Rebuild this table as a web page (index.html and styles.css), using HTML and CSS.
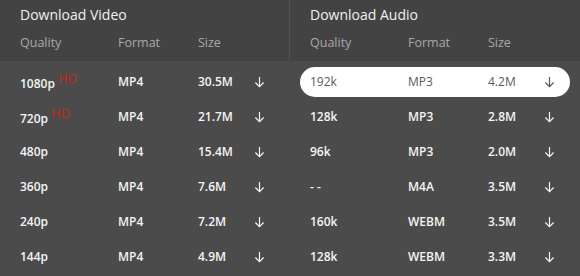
FILE: index.html
```html
<!DOCTYPE html>
<html lang="en">

<head>
    <meta charset="UTF-8">
    <title>Download</title>
    <link rel="stylesheet" href="styles.css">
</head>

<body>
    <div class="container">
        <div class="panel">
            <div class="panel-head">
                <h2>Download Video</h2>
                <div class="cols">
                    <span>Quality</span><span>Format</span><span>Size</span><span></span>
                </div>
            </div>
            <ul class="rows">
                <li class="row"><span>1080p<span class="hd">HD</span></span><span>MP4</span><span>30.5M</span><svg class="dl" viewBox="0 0 12 12"><path d="M6 0.5V11M1.5 6.5L6 11L10.5 6.5"/></svg></li>
                <li class="row"><span>720p<span class="hd">HD</span></span><span>MP4</span><span>21.7M</span><svg class="dl" viewBox="0 0 12 12"><path d="M6 0.5V11M1.5 6.5L6 11L10.5 6.5"/></svg></li>
                <li class="row"><span>480p</span><span>MP4</span><span>15.4M</span><svg class="dl" viewBox="0 0 12 12"><path d="M6 0.5V11M1.5 6.5L6 11L10.5 6.5"/></svg></li>
                <li class="row"><span>360p</span><span>MP4</span><span>7.6M</span><svg class="dl" viewBox="0 0 12 12"><path d="M6 0.5V11M1.5 6.5L6 11L10.5 6.5"/></svg></li>
                <li class="row"><span>240p</span><span>MP4</span><span>7.2M</span><svg class="dl" viewBox="0 0 12 12"><path d="M6 0.5V11M1.5 6.5L6 11L10.5 6.5"/></svg></li>
                <li class="row"><span>144p</span><span>MP4</span><span>4.9M</span><svg class="dl" viewBox="0 0 12 12"><path d="M6 0.5V11M1.5 6.5L6 11L10.5 6.5"/></svg></li>
            </ul>
        </div>

        <div class="panel">
            <div class="panel-head">
                <h2>Download Audio</h2>
                <div class="cols">
                    <span>Quality</span><span>Format</span><span>Size</span><span></span>
                </div>
            </div>
            <ul class="rows">
                <li class="row selected"><span>192k</span><span>MP3</span><span>4.2M</span><svg class="dl" viewBox="0 0 12 12"><path d="M6 0.5V11M1.5 6.5L6 11L10.5 6.5"/></svg></li>
                <li class="row"><span>128k</span><span>MP3</span><span>2.8M</span><svg class="dl" viewBox="0 0 12 12"><path d="M6 0.5V11M1.5 6.5L6 11L10.5 6.5"/></svg></li>
                <li class="row"><span>96k</span><span>MP3</span><span>2.0M</span><svg class="dl" viewBox="0 0 12 12"><path d="M6 0.5V11M1.5 6.5L6 11L10.5 6.5"/></svg></li>
                <li class="row"><span>- -</span><span>M4A</span><span>3.5M</span><svg class="dl" viewBox="0 0 12 12"><path d="M6 0.5V11M1.5 6.5L6 11L10.5 6.5"/></svg></li>
                <li class="row"><span>160k</span><span>WEBM</span><span>3.5M</span><svg class="dl" viewBox="0 0 12 12"><path d="M6 0.5V11M1.5 6.5L6 11L10.5 6.5"/></svg></li>
                <li class="row"><span>128k</span><span>WEBM</span><span>3.3M</span><svg class="dl" viewBox="0 0 12 12"><path d="M6 0.5V11M1.5 6.5L6 11L10.5 6.5"/></svg></li>
            </ul>
        </div>
    </div>
</body>

</html>
```

FILE: styles.css
```css
body {
    font-family: 'Open Sans', 'Noto Sans', sans-serif;
    background-color: #4b4b4b;
    color: #f4f4f4;
    margin: 0;
    padding: 0;
    height: 276px;
    overflow: hidden;
}

.container {
    display: flex;
    width: 580px;
}

.panel {
    width: 290px;
}

.panel-head {
    background-color: #434343;
    padding: 5px 0 9px 20px;
}

.panel:first-child .panel-head {
    border-right: 1px solid #525252;
}

.panel-head h2 {
    margin: 0 0 9px;
    font-size: 14px;
    font-weight: 400;
    line-height: 20px;
    color: #f0f0f0;
}

.cols {
    display: grid;
    grid-template-columns: 98px 80px 56px 11px;
    font-size: 12.5px;
    line-height: 18px;
    color: #a8a8a8;
}

.rows {
    list-style: none;
    margin: 0;
    padding: 6px 10px 0;
}

.row {
    display: grid;
    grid-template-columns: 98px 80px 56px 11px;
    align-items: center;
    height: 30px;
    margin-bottom: 5px;
    padding-left: 10px;
    border-radius: 15px;
    font-size: 12px;
    line-height: 16px;
    font-weight: 600;
}

.row.selected {
    background-color: #fff;
    color: #5a5a5a;
    font-weight: 400;
}

.hd {
    display: inline-block;
    color: #c4291c;
    font-size: 13px;
    font-weight: 400;
    line-height: 13px;
    margin-left: 3px;
    vertical-align: 5px;
}

.dl {
    width: 11px;
    height: 12px;
    fill: none;
    stroke: #f4f4f4;
    stroke-width: 1.3;
}

.row.selected .dl {
    stroke: #5a5a5a;
}
```
